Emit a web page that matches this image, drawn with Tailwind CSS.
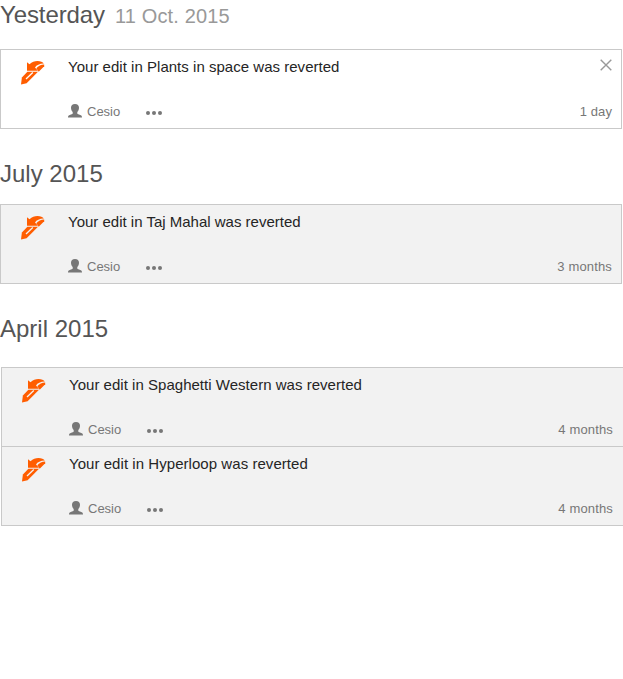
<!DOCTYPE html>
<html lang="en">
<head>
<meta charset="utf-8">
<title>Notifications</title>
<script src="https://cdn.jsdelivr.net/npm/@tailwindcss/browser@4"></script>
</head>
<body class="bg-white w-[623px] h-[679px] overflow-hidden font-['Liberation_Sans',Arial,sans-serif] text-[#777]">
<svg class="hidden">
  <symbol id="revert" viewBox="0 0 24 24">
    <path fill="#ff5d00" d="M6 1.300 8.500 3.300C11 1 13.500 .1 16.500 .1c3 0 5.300 1 6.300 2.500C18.500 2.700 15.500 4.200 14 6.500L17 9.700H6Z"/>
    <path fill="#ff5d00" d="M23.200 3.500v1.800L17.700 10.700 15.300 7.200C17.300 4.800 20 3.700 23.200 3.500Z"/>
    <path fill="#ff5d00" d="M6.400 10.800H17L5.600 22.300 0 23.500.9 16.500Z"/>
    <path stroke="currentColor" stroke-width="1.300" d="M5 18 11.800 11.500"/>
  </symbol>
  <symbol id="user" viewBox="0 0 14 14">
    <path fill="#777" d="M7 0c2.600 0 4 1.500 4 3.800 0 1.900-.8 3.300-1.700 4.200v1.500c.3.700 1.300.9 2.800 1.400 1.300.4 1.900 1 1.900 2.300v.4H0v-.4c0-1.300.6-1.900 1.900-2.300 1.500-.5 2.500-.7 2.800-1.400V8C3.800 7.100 3 5.700 3 3.800 3 1.500 4.400 0 7 0Z"/>
  </symbol>
  <symbol id="dots" viewBox="0 0 16 4">
    <g fill="#777"><circle cx="2" cy="2" r="2"/><circle cx="8" cy="2" r="2"/><circle cx="14" cy="2" r="2"/></g>
  </symbol>
</svg>

<h2 class="h-[49px] flex items-baseline text-2xl leading-[30px] text-[#555]"><span class="tracking-[-0.1px]">Yesterday</span><span class="ml-[10px] text-xl tracking-[0.14px] text-[#999]">11 Oct. 2015</span></h2>
<article class="w-[622px] h-20 border border-[#c9c9c9] flex pl-5 pr-[9px]">
  <svg class="w-6 h-6 mt-[11px] mr-[23px] shrink-0 text-white"><use href="#revert"/></svg>
  <div class="grow">
    <div class="flex justify-between pt-[9px] h-[53px]">
      <p class="text-[15px] leading-4 tracking-[0.025px] text-[#252525]">Your edit in Plants in space was reverted</p>
      <svg class="w-3 h-3" viewBox="0 0 12 12" stroke="#999" stroke-width="1.400"><path d="M.7.7l10.600 10.600M11.300.7.7 11.300"/></svg>
    </div>
    <div class="flex items-center h-4 text-[13px] leading-4">
      <svg class="w-[14px] h-[14px]"><use href="#user"/></svg><span class="ml-[5px] w-[59px] pt-0.5">Cesio</span>
      <svg class="w-4 h-1 mt-[3px]"><use href="#dots"/></svg><span class="ml-auto pt-0.5 tracking-[0.1px]">1 day</span>
    </div>
  </div>
</article>

<h2 class="h-[75px] pt-[30px] text-2xl leading-[30px] text-[#555]">July 2015</h2>
<article class="w-[622px] h-20 border border-[#c9c9c9] bg-[#f2f2f2] flex pl-5 pr-[9px]">
  <svg class="w-6 h-6 mt-[11px] mr-[23px] shrink-0 text-[#f2f2f2]"><use href="#revert"/></svg>
  <div class="grow">
    <p class="pt-[9px] h-[53px] text-[15px] leading-4 text-[#252525]">Your edit in Taj Mahal was reverted</p>
    <div class="flex items-center h-4 text-[13px] leading-4">
      <svg class="w-[14px] h-[14px]"><use href="#user"/></svg><span class="ml-[5px] w-[59px] pt-0.5">Cesio</span>
      <svg class="w-4 h-1 mt-[3px]"><use href="#dots"/></svg><span class="ml-auto pt-0.5 tracking-[0.15px]">3 months</span>
    </div>
  </div>
</article>

<h2 class="h-[83px] pt-[30px] text-2xl leading-[30px] text-[#555]">April 2015</h2>
<section class="ml-px w-[622px] border border-r-0 border-[#c9c9c9] bg-[#f2f2f2] divide-y divide-[#c9c9c9]">
  <article class="h-[79px] flex pl-5 pr-[10px]">
    <svg class="w-6 h-6 mt-[11px] mr-[23px] shrink-0 text-[#f2f2f2]"><use href="#revert"/></svg>
    <div class="grow">
      <p class="pt-[9px] h-[53px] text-[15px] leading-4 tracking-[0.025px] text-[#252525]">Your edit in Spaghetti Western was reverted</p>
      <div class="flex items-center h-4 text-[13px] leading-4">
        <svg class="w-[14px] h-[14px]"><use href="#user"/></svg><span class="ml-[5px] w-[59px] pt-0.5">Cesio</span>
        <svg class="w-4 h-1 mt-[3px]"><use href="#dots"/></svg><span class="ml-auto pt-0.5 tracking-[0.15px]">4 months</span>
      </div>
    </div>
  </article>
  <article class="h-[78px] flex pl-5 pr-[10px]">
    <svg class="w-6 h-6 mt-[11px] mr-[23px] shrink-0 text-[#f2f2f2]"><use href="#revert"/></svg>
    <div class="grow">
      <p class="pt-[9px] h-[53px] text-[15px] leading-4 tracking-[0.05px] text-[#252525]">Your edit in Hyperloop was reverted</p>
      <div class="flex items-center h-4 text-[13px] leading-4">
        <svg class="w-[14px] h-[14px]"><use href="#user"/></svg><span class="ml-[5px] w-[59px] pt-0.5">Cesio</span>
        <svg class="w-4 h-1 mt-[3px]"><use href="#dots"/></svg><span class="ml-auto pt-0.5 tracking-[0.15px]">4 months</span>
      </div>
    </div>
  </article>
</section>
</body>
</html>
